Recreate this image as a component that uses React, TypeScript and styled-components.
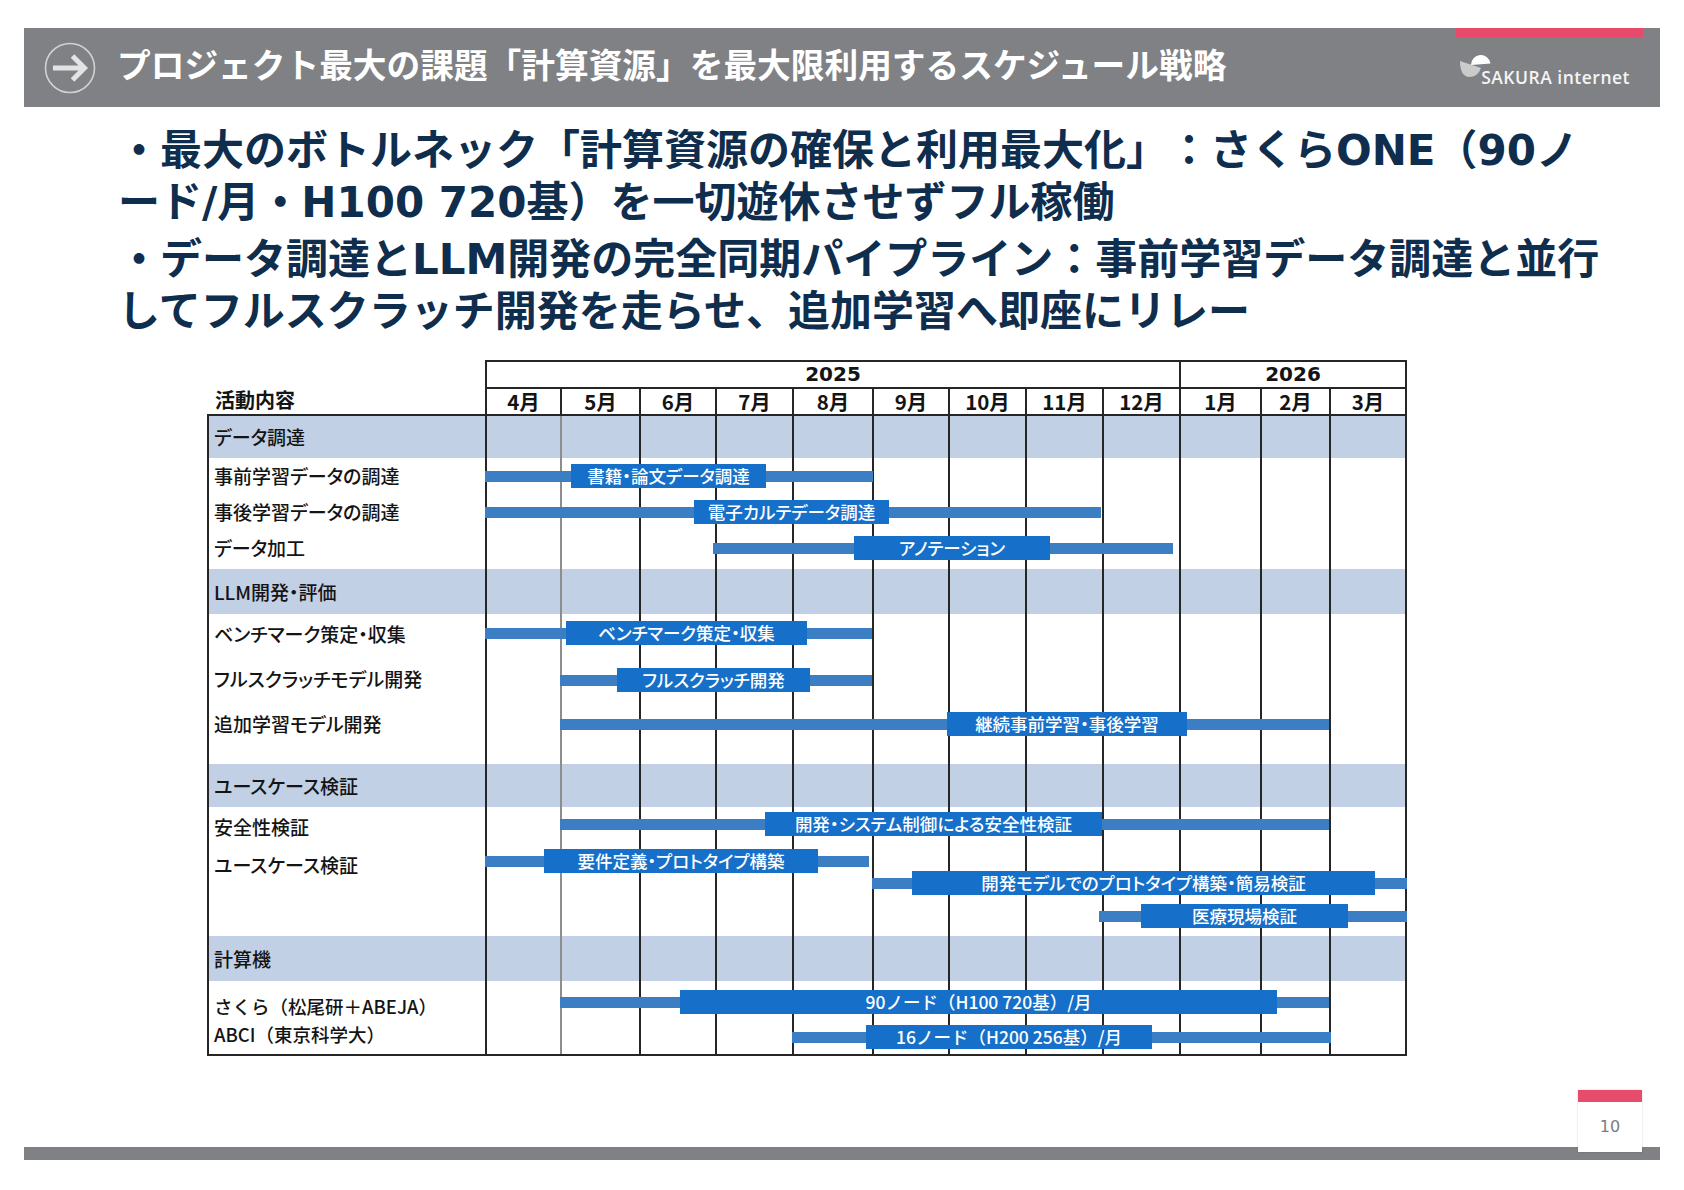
import React from "react";
import styled, { createGlobalStyle } from "styled-components";

const LINE = "#262626";
const BAND = "#c1d0e5";
const THIN = "#3c7ec3";
const BOX = "#1670c9";
const GRAY = "#7f8184";

const MONTHS = ["4月", "5月", "6月", "7月", "8月", "9月", "10月", "11月", "12月", "1月", "2月", "3月"];
const COLS = [75, 79, 76, 77, 80, 76, 77, 77, 77, 81, 69, 78];
const X0 = 485;

type Bar = { y: number; from: number; to: number; boxFrom: number; boxTo: number; text: string; wide?: boolean };
type RowData =
  | { kind: "band"; h: number; label: string }
  | { kind: "item"; h: number; label: string; labelY: number; wide?: boolean; bars: Bar[] };

const ROWS: RowData[] = [
  { kind: "band", h: 42, label: "データ調達" },
  {
    kind: "item", h: 36, label: "事前学習データの調達", labelY: 18,
    bars: [{ y: 18, from: 485, to: 873, boxFrom: 571, boxTo: 766, text: "書籍・論文データ調達" }],
  },
  {
    kind: "item", h: 36, label: "事後学習データの調達", labelY: 18,
    bars: [{ y: 18, from: 485, to: 1101, boxFrom: 694, boxTo: 889, text: "電子カルテデータ調達" }],
  },
  {
    kind: "item", h: 39, label: "データ加工", labelY: 18,
    bars: [{ y: 18, from: 713, to: 1173, boxFrom: 854, boxTo: 1050, text: "アノテーション" }],
  },
  { kind: "band", h: 45, label: "LLM開発・評価" },
  {
    kind: "item", h: 42, label: "ベンチマーク策定・収集", labelY: 20,
    bars: [{ y: 19, from: 485, to: 872, boxFrom: 566, boxTo: 807, text: "ベンチマーク策定・収集" }],
  },
  {
    kind: "item", h: 45, label: "フルスクラッチモデル開発", labelY: 23,
    bars: [{ y: 24, from: 560, to: 872, boxFrom: 617, boxTo: 810, text: "フルスクラッチ開発" }],
  },
  {
    kind: "item", h: 63, label: "追加学習モデル開発", labelY: 23,
    bars: [{ y: 23, from: 560, to: 1329, boxFrom: 947, boxTo: 1187, text: "継続事前学習・事後学習" }],
  },
  { kind: "band", h: 43, label: "ユースケース検証" },
  {
    kind: "item", h: 37, label: "安全性検証", labelY: 20,
    bars: [{ y: 17, from: 560, to: 1329, boxFrom: 765, boxTo: 1102, text: "開発・システム制御による安全性検証" }],
  },
  {
    kind: "item", h: 92, label: "ユースケース検証", labelY: 21,
    bars: [
      { y: 17, from: 485, to: 869, boxFrom: 544, boxTo: 818, text: "要件定義・プロトタイプ構築" },
      { y: 39, from: 872, to: 1407, boxFrom: 912, boxTo: 1375, text: "開発モデルでのプロトタイプ構築・簡易検証" },
      { y: 72, from: 1099, to: 1407, boxFrom: 1141, boxTo: 1348, text: "医療現場検証" },
    ],
  },
  { kind: "band", h: 45, label: "計算機" },
  {
    kind: "item", h: 39, label: "さくら（松尾研＋ABEJA）", labelY: 25, wide: true,
    bars: [{ y: 21, from: 560, to: 1329, boxFrom: 680, boxTo: 1277, text: "90ノード（H100 720基）/月", wide: true }],
  },
  {
    kind: "item", h: 34, label: "ABCI（東京科学大）", labelY: 14, wide: true,
    bars: [{ y: 17, from: 792, to: 1331, boxFrom: 866, boxTo: 1152, text: "16ノード（H200 256基）/月", wide: true }],
  },
];

const GlobalStyle = createGlobalStyle`
  html, body { margin: 0; padding: 0; background: #fff; }
  body {
    font-family: "Noto Sans CJK JP", "Noto Sans", sans-serif;
    text-spacing-trim: space-all;
  }
  *, *::before, *::after { box-sizing: border-box; }
`;

const Page = styled.div`
  width: 1684px;
  height: 1190px;
  display: flex;
  flex-direction: column;
  padding-top: 28px;
  overflow: hidden;
  background: #fff;
`;

/* ---------- header ---------- */

const Header = styled.header`
  position: relative;
  margin: 0 24px;
  height: 79px;
  flex-shrink: 0;
  background: ${GRAY};
  display: flex;
  align-items: center;
  padding: 0 30px 0 20px;
`;

const Title = styled.h1`
  margin: 0 0 8px 21px;
  color: #fff;
  font-family: "Noto Sans CJK JP", sans-serif;
  font-size: 33.7px;
  font-weight: 700;
  line-height: 1;
  white-space: nowrap;
`;

const AccentStrip = styled.div`
  position: absolute;
  top: 0;
  left: 1432px;
  width: 187px;
  height: 9px;
  background: #e84a6b;
`;

const Logo = styled.div`
  margin-left: auto;
  align-self: flex-end;
  margin-bottom: 20px;
  display: flex;
  align-items: flex-end;
`;

const LogoMark = styled.svg`
  margin: 0 -12px 9px 0;
`;

const LogoText = styled.span`
  color: #f4f4f4;
  font-family: "Open Sans", "Liberation Sans", sans-serif;
  font-weight: 600;
  font-size: 17.5px;
  letter-spacing: 0.5px;
  line-height: 20px;
  white-space: nowrap;
`;

/* ---------- bullets ---------- */

const Bullets = styled.div`
  margin: 18px 0 0 118px;
  color: #0f2d4d;
  font-family: "DejaVu Sans", "Noto Sans CJK JP", sans-serif;
  font-weight: 700;
  font-size: 42px;
  line-height: 52px;
  white-space: nowrap;
`;

const Bullet = styled.p`
  margin: 0 0 5px;
`;

/* ---------- chart ---------- */

const Chart = styled.div`
  margin: 17px 0 0 207px;
  width: 1200px;
  color: #141414;
  font-family: "Noto Sans CJK JP", sans-serif;
`;

const Grid = styled.div`
  display: grid;
  grid-template-columns: 278px ${COLS.map((c) => `${c}px`).join(" ")};
`;

const YearRow = styled(Grid)`
  height: 27px;
`;

const YearCell = styled.div<{ $col: string; $last?: boolean }>`
  grid-column: ${(p) => p.$col};
  border-top: 2px solid ${LINE};
  border-left: 2px solid ${LINE};
  ${(p) => (p.$last ? `border-right: 2px solid ${LINE};` : "")}
  display: flex;
  align-items: center;
  justify-content: center;
  font-family: "DejaVu Sans", sans-serif;
  font-size: 20px;
  font-weight: 700;
  line-height: 1;
  padding-bottom: 1px;
`;

const MonthRow = styled(Grid)`
  height: 27px;
`;

const HeadLabel = styled.div`
  grid-column: 1;
  display: flex;
  align-items: center;
  padding: 0 0 2px 8px;
  font-size: 20px;
  font-weight: 700;
  line-height: 1;
`;

const MonthCell = styled.div<{ $last?: boolean }>`
  border-top: 2px solid ${LINE};
  border-left: 2px solid ${LINE};
  ${(p) => (p.$last ? `border-right: 2px solid ${LINE};` : "")}
  display: flex;
  align-items: center;
  justify-content: center;
  font-size: 20.5px;
  font-weight: 700;
  line-height: 1;
  padding-bottom: 1px;
`;

const Body = styled.div`
  border-top: 2px solid ${LINE};
  border-bottom: 2px solid ${LINE};
`;

const Row = styled(Grid)<{ $h: number; $band?: boolean }>`
  height: ${(p) => p.$h}px;
  background: ${(p) => (p.$band ? BAND : "transparent")};
`;

const LabelCell = styled.div<{ $band?: boolean; $y: number; $wide?: boolean }>`
  grid-column: 1;
  grid-row: 1;
  border-left: 2px solid ${LINE};
  padding-left: 5px;
  font-size: ${(p) => (p.$wide ? 18.5 : 19)}px;
  font-weight: 500;
  font-feature-settings: ${(p) => (p.$wide ? "normal" : '"palt"')};
  line-height: 26px;
  white-space: nowrap;
  display: flex;
  align-items: ${(p) => (p.$band ? "center" : "flex-start")};
  padding-top: ${(p) => (p.$band ? 0 : p.$y - 13)}px;
`;

const GridCell = styled.div<{ $col: number; $soft?: boolean; $last?: boolean }>`
  grid-row: 1;
  grid-column: ${(p) => p.$col};
  border-left: 2px solid ${(p) => (p.$soft ? "#8d8d8d" : LINE)};
  ${(p) => (p.$last ? `border-right: 2px solid ${LINE};` : "")}
`;

const Lane = styled.div`
  grid-row: 1;
  grid-column: 2 / -1;
  position: relative;
`;

const ThinBar = styled.div`
  position: absolute;
  height: 11px;
  background: ${THIN};
`;

const BoxBar = styled.div<{ $wide?: boolean }>`
  position: absolute;
  height: 24px;
  background: ${BOX};
  color: #fff;
  font-size: 17.5px;
  font-weight: 500;
  font-feature-settings: ${(p) => (p.$wide ? "normal" : '"palt"')};
  line-height: 24px;
  text-align: center;
  white-space: nowrap;
`;

/* ---------- footer ---------- */

const Footer = styled.footer`
  position: relative;
  margin: auto 24px 30px;
  height: 13px;
  flex-shrink: 0;
  background: ${GRAY};
`;

const PageBox = styled.div`
  position: absolute;
  right: 18px;
  bottom: 8px;
  width: 64px;
  height: 62px;
  background: #fff;
  border-top: 12px solid #e84c6c;
  box-shadow: 0 0 2px rgba(0, 0, 0, 0.18);
  display: flex;
  align-items: center;
  justify-content: center;
  color: #7c7c7c;
  font-family: "DejaVu Sans", sans-serif;
  font-size: 16px;
  padding-bottom: 2px;
`;

const ArrowIcon = () => (
  <svg width="52" height="52" viewBox="0 0 52 52">
    <circle cx="26" cy="26" r="24.5" fill="none" stroke="#d2d2d2" strokeWidth="1.6" />
    <path d="M9 26 H40 M28.5 14 L40.5 26 L28.5 38" fill="none" stroke="#e3e3e3" strokeWidth="5" />
  </svg>
);

const SakuraMark = () => (
  <LogoMark width="34" height="27" viewBox="0 0 34 27">
    <path d="M1 10 L22 17 Q19 26 10 26 Q1 25 1 10 Z" fill="#cbcbcb" />
    <path d="M12 14 A9.8 9.8 0 0 1 31.5 12.5 Z" fill="#ffffff" />
  </LogoMark>
);

const BarRow = ({ bars }: { bars: Bar[] }) => (
  <Lane>
    {bars.map((b) => (
      <React.Fragment key={b.text}>
        <ThinBar style={{ left: b.from - X0, width: b.to - b.from, top: b.y - 5.5 }} />
        <BoxBar
          $wide={b.wide}
          style={{ left: b.boxFrom - X0, width: b.boxTo - b.boxFrom, top: b.y - 12 }}
        >
          {b.text}
        </BoxBar>
      </React.Fragment>
    ))}
  </Lane>
);

const MonthLines = () => (
  <>
    {COLS.map((_, i) => (
      <GridCell key={i} $col={i + 2} $soft={i === 1} $last={i === COLS.length - 1} />
    ))}
  </>
);

export default function App() {
  return (
    <>
      <GlobalStyle />
      <Page>
        <Header>
          <AccentStrip />
          <ArrowIcon />
          <Title>プロジェクト最大の課題「計算資源」を最大限利用するスケジュール戦略</Title>
          <Logo>
            <SakuraMark />
            <LogoText>SAKURA internet</LogoText>
          </Logo>
        </Header>

        <Bullets>
          <Bullet>
            ・最大のボトルネック「計算資源の確保と利用最大化」：さくらONE（90ノ
            <br />
            ード/月・H100 720基）を一切遊休させずフル稼働
          </Bullet>
          <Bullet>
            ・データ調達とLLM開発の完全同期パイプライン：事前学習データ調達と並行
            <br />
            してフルスクラッチ開発を走らせ、追加学習へ即座にリレー
          </Bullet>
        </Bullets>

        <Chart>
          <YearRow>
            <YearCell $col="2 / span 9">2025</YearCell>
            <YearCell $col="11 / span 3" $last>
              2026
            </YearCell>
          </YearRow>
          <MonthRow>
            <HeadLabel>活動内容</HeadLabel>
            {MONTHS.map((m, i) => (
              <MonthCell key={m} $last={i === MONTHS.length - 1}>
                {m}
              </MonthCell>
            ))}
          </MonthRow>
          <Body>
            {ROWS.map((r) =>
              r.kind === "band" ? (
                <Row key={r.label} $h={r.h} $band>
                  <LabelCell $band $y={0}>
                    {r.label}
                  </LabelCell>
                  <MonthLines />
                </Row>
              ) : (
                <Row key={r.label} $h={r.h}>
                  <LabelCell $y={r.labelY} $wide={r.wide}>
                    {r.label}
                  </LabelCell>
                  <MonthLines />
                  <BarRow bars={r.bars} />
                </Row>
              )
            )}
          </Body>
        </Chart>

        <Footer>
          <PageBox>10</PageBox>
        </Footer>
      </Page>
    </>
  );
}
